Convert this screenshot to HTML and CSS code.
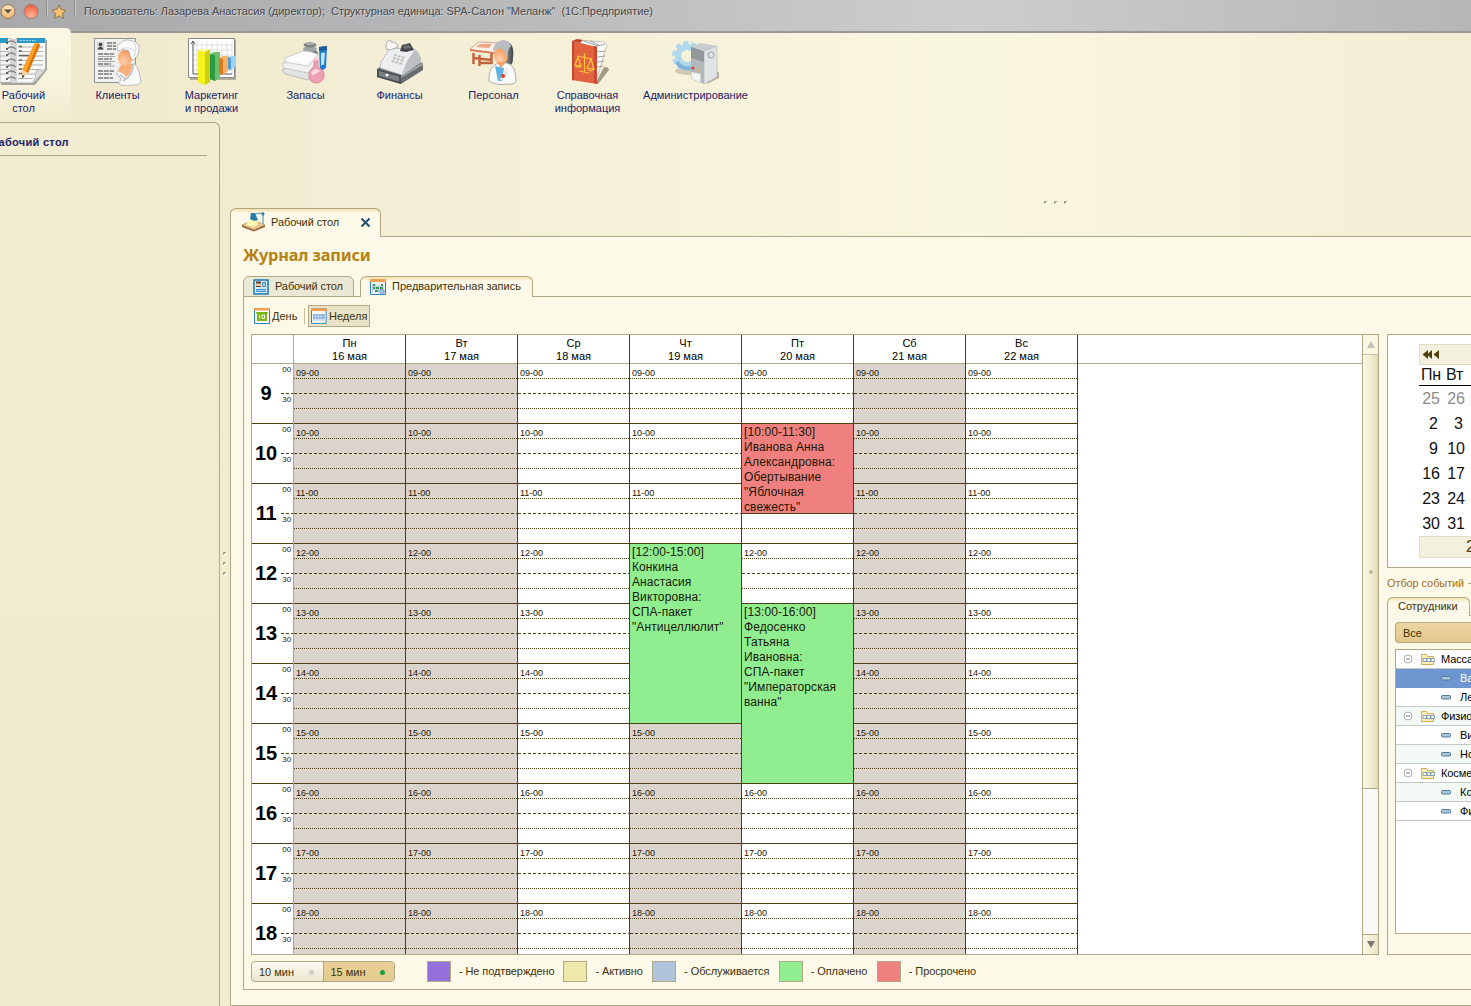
FILE: index.html
```html
<!DOCTYPE html>
<html lang="ru">
<head>
<meta charset="utf-8">
<title>Журнал записи</title>
<link rel="stylesheet" href="styles.css">
</head>
<body>
<div class="app">
  <header class="titlebar">
    <svg class="tb-icons" width="80" height="31" viewBox="0 0 80 31">
      <defs>
        <radialGradient id="gOr" cx=".5" cy=".3" r=".7"><stop offset="0" stop-color="#ffeccb"/><stop offset="1" stop-color="#eeb063"/></radialGradient>
        <radialGradient id="gRed" cx=".5" cy=".85" r=".8"><stop offset="0" stop-color="#ffb898"/><stop offset="1" stop-color="#f2603f"/></radialGradient>
        <linearGradient id="gCoat"><stop offset="0" stop-color="#fff"/><stop offset="1" stop-color="#dcdcdc"/></linearGradient>
        <linearGradient id="gHair"><stop offset="0" stop-color="#eceded"/><stop offset="1" stop-color="#3f4346"/></linearGradient>
        <radialGradient id="gFace" cx=".4" cy=".7" r=".8"><stop offset="0" stop-color="#ffd0ae"/><stop offset="1" stop-color="#f58f50"/></radialGradient>
      </defs>
      <circle cx="8" cy="11.500" r="7" fill="url(#gOr)" stroke="#8d7a62"/>
      <path d="M4 9.500h8l-4 4z" fill="#5b4a36"/>
      <circle cx="31" cy="11.500" r="7" fill="url(#gRed)" stroke="#a8796c"/>
      <path d="M46.500 1v16M74.500 1v16" stroke="#8b8b8b"/><path d="M47.500 1v16M75.500 1v16" stroke="#c9c9c9"/>
      <path d="M59 5l2.100 4.500 5 .6-3.700 3.400 1 4.900-4.400-2.500-4.400 2.500 1-4.900-3.700-3.400 5-.6z" fill="#fbc070" stroke="#8a7355"/>
    </svg>
    <span class="tb-text">Пользователь: Лазарева Анастасия (директор);&nbsp; Структурная единица: SPA-Салон "Меланж"&nbsp; (1С:Предприятие)</span>
  </header>

  <nav class="sections">
    <a class="section active">
      <svg width="48" height="48" viewBox="0 0 48 48">
        <path d="M1 2h46v30L35 47H1z" fill="#a5a49a"/>
        <path d="M0 .5h11v44H0z" fill="#f4f4f2" stroke="#a2a2a0" stroke-width=".7"/>
        <path d="M16 .5h29.500V32L34 45H16z" fill="#f8f8f6" stroke="#a2a2a0" stroke-width=".7"/>
        <path d="M17 0h28v5H17zM0 0h8v5H0z" fill="#2b9ac8"/><path d="M20 2.500h16" stroke="#a9dcf0" stroke-dasharray="2 1"/>
        <path d="M11 1h5v44h-5z" fill="#d4d4d2"/>
        <path d="M18 9h25M18 13.500h25M18 18h25M18 22.500h25M18 27h25M18 31.500h23M18 36h18M18 40.500h15M0 13.500h9M0 18h9M0 22.500h9M0 27h9M0 31.500h9M0 36h9" stroke="#b0b0b0"/>
        <path d="M19 8.500h3M19 13h3M19 17.500h10M19 22h3M19 26.500h3M19 31h3M19 35.500h3" stroke="#666" stroke-width="1.500"/>
        <g fill="none" stroke="#888" stroke-width="1.200"><path d="M7 5q4-4 9 0M7 11q4-4 9 0M7 17q4-4 9 0M7 23q4-4 9 0M7 29q4-4 9 0M7 35q4-4 9 0M7 41q4-4 9 0"/></g>
        <g fill="#444"><circle cx="7" cy="5" r="1"/><circle cx="7" cy="11" r="1"/><circle cx="7" cy="17" r="1"/><circle cx="7" cy="23" r="1"/><circle cx="7" cy="29" r="1"/><circle cx="7" cy="35" r="1"/><circle cx="7" cy="41" r="1"/></g>
        <path d="M46 31q-6 3-10 2 1 7-4 13z" fill="#dededc" stroke="#a5a5a3" stroke-width=".7"/>
        <path d="M34 6q3-3 6 1L28 35l-6-3z" fill="#fda226"/><path d="M38 5l2 2-12 28-2-1z" fill="#dd720c"/><path d="M22 32l6 3-5.500 5z" fill="#f4d2a0"/><path d="M22.500 37l2 1-2.500 2.500z" fill="#222"/>
      </svg>
      <span>Рабочий<br>стол</span>
    </a>
    <a class="section">
      <svg width="48" height="48" viewBox="0 0 48 48">
        <path d="M.5.500h41v44H.5z" fill="#f0f0ef" stroke="#8f9296"/>
        <path d="M3 4h7v8H3z" fill="#d5d5d5"/><circle cx="6.500" cy="6.500" r="1.800" fill="#444"/><path d="M3.500 11.500q3-6 6 0z" fill="#444"/>
        <path d="M13 5h9M13 8h9M13 11h9M4 16h16M4 21h14M4 26h13M4 33h16M4 36h14M4 40h15" stroke="#777" stroke-width="1.400" stroke-dasharray="5 .8"/>
        <path d="M4 18.500h17M4 23.500h17M4 28h17" stroke="#aaa"/>
        <path d="M24 45q5-3 1-7-4-2-1-5 4-5 7-6l10-1q4 4 6 18-3 4-9 3-9 2-14-2z" fill="#fafafa" stroke="#a0a0a0" stroke-width=".7"/>
        <path d="M28 26q-5 5-3 8 5 1 7 5 6-4 6-13l-4-1z" fill="#f9ae7a"/>
        <path d="M39 26q1 11-10 17M26 37l6 4" fill="none" stroke="#bdbdbd" stroke-width="1.500"/>
        <ellipse cx="31" cy="20" rx="7" ry="8" fill="url(#gFace)"/>
        <path d="M24 13q-3-6 3-8 4-5 11-2 8 1 7 9 0 6-4 8l-2 3-3-5-1-5q-5-3-11 0z" fill="#fafafa" stroke="#a5a5a5" stroke-width=".7"/><path d="M27 11q8-3 13 2M40 5q4 5 0 13" fill="none" stroke="#d5d5d5"/>
      </svg>
      <span>Клиенты</span>
    </a>
    <a class="section">
      <svg width="48" height="48" viewBox="0 0 48 48">
        <path d="M2 2h46v40H2z" fill="#b1ad9a"/><path d="M.5.500h46v39H.5z" fill="#fff" stroke="#888"/>
        <path d="M9 4v33M14 4v33M19 4v33M24 4v33M29 4v33M34 4v33M39 4v33M44 4v33M4 7h40M4 12h40M4 17h40M4 22h40M4 27h40M4 32h40" stroke="#d3d3d3" stroke-width=".7"/>
        <path d="M5 3v33h39M3 6l2-3 2 3" fill="none" stroke="#555"/>
        <path d="M10 13l4-2h8v33l-5 3-7-3z" fill="#cfcf12"/><path d="M10 13l7 1v33l-7-3z" fill="#f4f41c"/><path d="M10 13l4-2h8l-5 3z" fill="#fdfd9a"/>
        <path d="M22 16l4-2h6v26l-5 3-5-2z" fill="#6cc06c"/><path d="M22 16l5 1v26l-5-2z" fill="#2f9a46"/>
        <path d="M31 20l4-2h5v15l-5 4-4-2z" fill="#f9b065"/><path d="M31 20l4 1v16l-4-2z" fill="#e07522"/>
        <path d="M40 19l3-1h5v10l-5 4-3-1z" fill="#9dd2f0"/><path d="M40 19l3 1v12l-3-1z" fill="#4f9fd0"/>
      </svg>
      <span>Маркетинг<br>и продажи</span>
    </a>
    <a class="section">
      <svg width="48" height="48" viewBox="0 0 48 48">
        <ellipse cx="28" cy="15" rx="8" ry="3.500" fill="#6d7476"/><ellipse cx="28" cy="11" rx="7" ry="3" fill="#a0a5a6"/><ellipse cx="28" cy="7" rx="6.500" ry="2.500" fill="#7c8385"/><ellipse cx="28" cy="5.500" rx="4" ry="1.500" fill="#a9adae"/>
        <path d="M37 9l8-1-1 22-6 4z" fill="#1e7fd0"/><path d="M39 15l4-.5-1 12-3 1z" fill="#bfe2fa"/><path d="M37 9l8-1v4l-8 1z" fill="#2458a0"/>
        <path d="M0 32l22-9 14 7-10 12-23-6z" fill="#e4e4e4" stroke="#a9a9a9" stroke-width=".7"/>
        <path d="M0 26l22-9 14 6-10 12-24-5z" fill="#f0f0f0" stroke="#b5b5b5" stroke-width=".7"/>
        <path d="M3 20l18-7q10 0 15 4l-10 11-23-4z" fill="#fcfcfc" stroke="#b9b9b9" stroke-width=".7"/>
        <path d="M32 21h4v8q7 3 6 9-1 7-8 7-7-1-7-7 0-6 5-9z" fill="#f0a0b4" stroke="#cd7d90" stroke-width=".7"/><path d="M29 34q3-4 9-2-4 5-8 5z" fill="#fbd7df"/><ellipse cx="34" cy="21" rx="3" ry="1.500" fill="#f8c8d4"/>
      </svg>
      <span>Запасы</span>
    </a>
    <a class="section">
      <svg width="48" height="48" viewBox="0 0 48 48">
        <path d="M1 31l9-6h37v7L25 46 1 39z" fill="#6a6e70"/><path d="M1 31l24 6v9L1 39z" fill="#4b4f51"/><path d="M3 33l20 5.500v5L3 38z" fill="#7c8082"/><path d="M25 37l22-13v3L25 40z" fill="#9a9ea0"/>
        <path d="M5 24l9-14 24 1q6 3 7 13L26 37 4 30z" fill="#eceeef" stroke="#a8acae" stroke-width=".7"/><path d="M26 36l5-13 8-11q5 4 6 12z" fill="#bcc0c2"/>
        <path d="M18 17l11 3M17 20l11 3M15.500 23l11 3M20 16l-4 9M24 17l-4 9M28 18l-4 9" stroke="#b2b6b8" stroke-width=".8"/>
        <path d="M26 7l8-2 4 7-8 2-6-1z" fill="#45494c"/><path d="M27 8l6-1 2 3-7 1z" fill="#6f7476"/><path d="M10 11q0-9 4-9 1 4 4 2 4 1 4 5l-8 3z" fill="#f9f9f9" stroke="#999" stroke-width=".8"/><circle cx="11" cy="37" r="1.500" fill="#f4f4f4"/>
      </svg>
      <span>Финансы</span>
    </a>
    <a class="section">
      <svg width="48" height="48" viewBox="0 0 48 48">
        <path d="M3.500 15v11M9.500 17v11M21.500 15v11M3 20l19 2M9.500 25h12" stroke="#c2633a" stroke-width="2.500"/><path d="M0 11l9-7 20 1-5 10-22-3z" fill="#fff4ec" stroke="#c98563" stroke-width=".7"/><path d="M10 6h12l-3 4-13-1z" fill="#f2a583"/><path d="M0 11l24 3v2L0 13z" fill="#d9805a"/>
        <path d="M26 8q3-6 10-5 9 2 7 17 0 7-3 7l-7-2z" fill="url(#gHair)"/>
        <ellipse cx="31" cy="18" rx="7" ry="8" fill="url(#gFace)"/><path d="M23 13q0-10 11-11 6 1 7 6-4 4-4 11-2-6-5-8-5-1-9 2z" fill="#b9bdbf"/>
        <path d="M19 43q-1-14 9-18h9q9 2 9 18-2 4-8 3-12 2-19-3z" fill="#fafafa" stroke="#8c8c8c" stroke-width=".7"/><path d="M25 28l3 15h4l2-13z" fill="#5db4e0"/><path d="M27 24h9l-5 6z" fill="#f6a068"/><path d="M29 43l8-15 1 9z" fill="#e8e8e8"/><circle cx="33" cy="38" r="2" fill="#ea3820"/>
      </svg>
      <span>Персонал</span>
    </a>
    <a class="section">
      <svg width="48" height="48" viewBox="0 0 48 48">
        <path d="M31 46l9-17q5 0 5 3L34 46z" fill="#a39b86"/>
        <path d="M14 2l26 2 3 3-10 33z" fill="#fff" stroke="#aaa" stroke-width=".7"/><path d="M30 9l11-3M33 14l8-1M33 19l8-1M33 24l7-1M33 29l6-1M20 3l14 5M26 3l9 4" stroke="#888" stroke-width=".8"/>
        <path d="M8 3l5-2 6 1-3 3z" fill="#c2452b"/>
        <path d="M8 3l25 6v37L8 42z" fill="#e2623f"/><path d="M8 3l2 .5v39L8 42z" fill="#c24a2e"/><path d="M30 8l3 1v37l-3-1z" fill="#c94a2e"/>
        <path d="M20.500 15v19M13 18l15 3M15 33l10 2M11 27l3-8 3 9zM23 30l4-9 3 10zM11 27q3 4 6 1M23 30q3 5 7 1" stroke="#ffc63a" stroke-width="1.200" fill="none"/>
      </svg>
      <span>Справочная<br>информация</span>
    </a>
    <a class="section wide">
      <svg width="48" height="48" viewBox="0 0 48 48">
        <ellipse cx="17" cy="33" rx="14" ry="4" fill="#d0cbb0"/>
        <circle cx="15" cy="18" r="13" fill="none" stroke="#b0d8ee" stroke-width="4" stroke-dasharray="5 3.170"/><circle cx="15" cy="18" r="9" fill="none" stroke="#b0d8ee" stroke-width="6"/><path d="M5 24a12 12 0 0 0 14 6" fill="none" stroke="#7fb2d6" stroke-width="4"/>
        <path d="M35 46l12-6v-6l-9-2z" fill="#b9b49e"/>
        <path d="M19 9l10-4 16 3-10 5z" fill="#c9cccd"/><path d="M19 9l13 4v33l-13-5z" fill="#b4b8ba"/><path d="M32 13l13-5v31l-13 7z" fill="#e0e2e3" stroke="#a9adb0" stroke-width=".5"/>
        <path d="M19 9l13 4v11l-13-4z" fill="#92979a"/><path d="M19.500 34l9 2v8l-9-3z" fill="#f4f4f4"/><circle cx="21" cy="30" r="1.500" fill="#e43c1f"/><circle cx="27" cy="32" r="1" fill="#f0b63a"/><circle cx="39" cy="17" r="3" fill="none" stroke="#9da1a4"/>
      </svg>
      <span>Администрирование</span>
    </a>
  </nav>

  <div class="workspace">
    <aside class="sidebar"><h2>Рабочий стол</h2></aside>
    <div class="splitter"><i></i><i></i><i></i></div>
    <main class="main">
      <div class="hsplit"><i></i><i></i><i></i></div>
      <div class="tabs outer">
        <div class="tab on">
          <svg width="26" height="22" viewBox="0 0 26 22"><path d="M1 14l12-5 11 5-11 5z" fill="#e9c896" stroke="#b98e5c" stroke-width=".7"/><path d="M1 14v2l12 4.500 11-4.500v-2l-11 5z" fill="#96683a"/><path d="M9 7l-4 7 8 2 4-3-1-5z" fill="#fff9b4"/><path d="M10 2l4 0 3 7q-4 2-8-1z" fill="#2a7aa8"/><path d="M14 3l8-1v11" fill="none" stroke="#5b9cbc" stroke-width="1.200"/><circle cx="22" cy="3" r="1.500" fill="#2a7aa8"/></svg>
          <span>Рабочий стол</span>
          <svg class="close" width="11" height="11" viewBox="0 0 11 11"><path d="M1.500 1.500l8 8M9.500 1.500l-8 8" stroke="#23506f" stroke-width="2"/></svg>
        </div>
      </div>
      <section class="panel">
        <h1>Журнал записи</h1>
        <div class="tabs inner">
          <div class="tab off">
            <svg width="16" height="16" viewBox="0 0 16 16"><path d="M1 1h14v14H1z" fill="#d6ebfa" stroke="#1b77b4" stroke-width="1.500"/><path d="M3 3h5v5H3z" fill="#f4c7a0"/><path d="M3 2.500h5v2H3zM3 7h5v1H3z" fill="#5a4038"/><path d="M9.500 3.500h3v4h-3zM3.500 10.500h9v2h-9z" fill="#a8d5f3" stroke="#3f93c8"/></svg>
            <span>Рабочий стол</span>
          </div>
          <div class="tab on">
            <svg width="16" height="16" viewBox="0 0 16 16"><path d="M.5.500h15v15H.5z" fill="#eaf5fc" stroke="#2a80b8"/><path d="M0 0h16v3H0z" fill="#f0a050"/><path d="M2.500 5v9M5.500 5v9M8.500 5v9M11.500 5v9M2 7.500h12M2 10.500h12" stroke="#a9c9e0" stroke-width=".7"/><path d="M3 5h2v2H3zM11 5h2v2h-2zM3 8h2v2H3zM6 8h3v2H6zM10 8h3v2h-3zM5 11h3v2H5z" fill="#3a9a52"/><path d="M10 11h4v3h-4z" fill="#b5d5ee" stroke="#6a94b4"/></svg>
            <span>Предварительная запись</span>
          </div>
        </div>
        <div class="page">
          <div class="journal">
            <div class="toolbar">
              <button class="tool">
                <svg width="16" height="16" viewBox="0 0 16 16"><path d="M.5.500h15v15H.5z" fill="#fff" stroke="#2a80b8"/><path d="M0 0h16v2.500H0z" fill="#f0a050"/><path d="M2 4h12v1.500H2zM3 5h10v8H3z" fill="#7cb518"/><path d="M5.500 6.500v4M8 7h2.500v3.500H8z" fill="none" stroke="#fff"/></svg>День</button>
              <i class="sep"></i>
              <button class="tool pressed">
                <svg width="16" height="16" viewBox="0 0 16 16"><path d="M.5.500h15v15H.5z" fill="#fff" stroke="#2a80b8"/><path d="M0 0h16v3H0z" fill="#f0a050"/><path d="M2 6h12v5H2z" fill="#7fa8dc"/><path d="M2 11h12v2H2z" fill="#c9daf0"/><path d="M4.500 4.500v9M7.500 4.500v9M10.500 4.500v9M2 8.500h12" stroke="#dbe7f5" stroke-width=".7"/></svg>Неделя</button>
            </div>
            <div class="schedule">
              <div class="week" id="week"></div>
              <div class="scroll"><b class="up"></b><div class="thumb"><i></i></div><b class="down"></b></div>
            </div>
            <div class="footer">
              <div class="steps"><span>10 мин<i></i></span><span class="sel">15 мин<i></i></span></div>
              <div class="key"><i class="k1"></i>- Не подтверждено</div>
              <div class="key"><i class="k2"></i>- Активно</div>
              <div class="key"><i class="k3"></i>- Обслуживается</div>
              <div class="key"><i class="k4"></i>- Оплачено</div>
              <div class="key"><i class="k5"></i>- Просрочено</div>
            </div>
          </div>
          <div class="side">
            <div class="calbox">
              <div class="cal">
                <div class="calhead"><svg width="18" height="9" viewBox="0 0 18 9"><path d="M6 0v9L.5 4.500zM10 0v9L5 4.500zM17 0v9L11.500 4.500z" fill="#4e3f08"/></svg></div>
                <div class="dow"><span>Пн</span><span>Вт</span></div>
                <div class="days"><span class="dim">25</span><span class="dim">26</span><span class="one">2</span><span class="one">3</span><span class="one">9</span><span>10</span><span>16</span><span>17</span><span>23</span><span>24</span><span>30</span><span>31</span></div>
                <div class="calfoot">2</div>
              </div>
            </div>
            <div class="legend">Отбор событий<hr></div>
            <div class="tabs staff"><div class="tab on"><span>Сотрудники</span></div></div>
            <div class="staffpage">
              <div class="all">Все</div>
              <div class="tree" id="tree"></div>
            </div>
          </div>
        </div>
      </section>
    </main>
  </div>
</div>
<script src="script.js"></script>
</body>
</html>
```
FILE: styles.css
```css
* { box-sizing: border-box; }
body { margin: 0; font: 11px/13px "Liberation Sans", Arial, sans-serif; color: #3d3208; overflow: hidden; }
.app { width: 1471px; height: 1006px; display: flex; flex-direction: column; overflow: hidden; background: linear-gradient(90deg, #efe8cb, #f3edd5 25%, #f9f6df 66%, #f4edd6); }
h1, h2 { margin: 0; }

.titlebar { height: 33px; flex: none; display: flex; background: linear-gradient(90deg, #a9a9ab, #b4b4b6 25%, #cdcdcd 66%, #b5b6b8); border-bottom: 2px solid #9b998f; }
.tb-icons { flex: none; }
.tb-text { padding: 5px 0 0 4px; color: #4a4a4a; text-shadow: 1px 1px 0 #d0d0d0; white-space: nowrap; letter-spacing: -.045px; }

.sections { height: 94px; flex: none; display: flex; margin: -5px 0 0 -24px; position: relative; }
.section { width: 94px; display: flex; flex-direction: column; align-items: center; padding: 10px 0 0 1px; gap: 3px; text-align: center; color: #1b2268; white-space: nowrap; }
.section.wide { width: 122px; }
.section.active { width: 95px; margin-right: -1px; padding-left: 0; border-radius: 0 5px 0 0; background: linear-gradient(#faf8e4, #f8f5de 50%, #f1eacf); }
.section svg { flex: none; }

.workspace { flex: 1; display: flex; min-height: 0; }
.sidebar { width: 220px; flex: none; border: solid #b0a886; border-width: 1px 1px 0 0; border-radius: 0 6px 0 0; background: linear-gradient(#f2ecd2, #efe9ce); padding: 13px 12px 0 0; }
.sidebar h2 { font-size: 11px; line-height: 13px; color: #1b2268; border-bottom: 1px solid #b0a886; padding-bottom: 6px; margin-left: -9px; letter-spacing: .3px; }
.splitter { width: 10px; flex: none; display: flex; flex-direction: column; align-items: center; gap: 6px; padding-top: 430px; }
.splitter i, .hsplit i { width: 4px; height: 4px; background: linear-gradient(135deg, #a9a17f 50%, #fbf8e8 50%); }
.main { flex: 1; min-width: 0; display: flex; flex-direction: column; }
.hsplit { height: 86px; display: flex; gap: 6px; align-items: flex-end; justify-content: center; padding: 0 0 3px 411px; flex: none; }

.tabs { display: flex; position: relative; z-index: 1; margin-bottom: -1px; }
.tab { display: flex; align-items: center; border: 1px solid #b0a886; border-bottom: 0; border-radius: 6px 6px 0 0; white-space: nowrap; }
.tab.on { background: linear-gradient(#f7dfa8, #fcf9e9 4px); }
.outer .tab { width: 151px; height: 29px; padding: 0 0 2px 10px; gap: 4px; letter-spacing: -.08px; }
.close { margin: 1px 0 0 17px; }
.panel { flex: 1; min-height: 0; background: #fcf9e9; border: 1px solid #b0a886; border-right: 0; padding: 8px 0 15px 12px; display: flex; flex-direction: column; }
h1 { font: bold 16.300px/20px "Noto Sans", sans-serif; color: #b5820f; letter-spacing: -.15px; }
.inner { margin-top: 11px; align-items: flex-end; gap: 6px; }
.inner .tab { height: 21px; gap: 6px; padding: 0 0 1px 9px; }
.inner .off { width: 111px; background: #ebe8d5; border-bottom: 1px solid #b0a886; padding-bottom: 0; letter-spacing: -.1px; }
.inner .on { width: 173px; }
.page { flex: 1; min-height: 0; border: 1px solid #b0a886; border-right: 0; display: flex; gap: 8px; padding: 8px 0 7px 7px; }
.journal { width: 1128px; flex: none; display: flex; flex-direction: column; }
.toolbar { display: flex; height: 22px; flex: none; align-items: center; }
.tool { font: inherit; color: inherit; border: 1px solid transparent; background: none; height: 22px; padding: 0 2px; display: flex; align-items: center; gap: 2px; }
.tool.pressed { background: #e9e4c8; border-color: #b0a886; width: 62px; }
.sep { width: 1px; height: 16px; background: #c9bf98; margin: 0 3px 0 4px; }

.schedule { height: 621px; flex: none; margin-top: 7px; border: 1px solid #b0a886; display: flex; background: #fff; }
.week { flex: 1; display: flex; overflow: hidden; background: linear-gradient(#b0a886, #b0a886) 0 28px / 100% 1px no-repeat; }
.col { width: 112px; flex: none; position: relative; border-right: 1px solid #4e3f12; color: #1b1804; }
.col.time { width: 42px; border-color: #b0a886; }
.head { height: 29px; padding-top: 2px; text-align: center; border-bottom: 1px solid #b0a886; font-size: 11px; color: #000; }
.hour { height: 60px; border-bottom: 1px solid #4e3f12; font-size: 9px; line-height: 10px; padding: 4px 0 0 2px;
  background: repeating-linear-gradient(90deg, #4e3f12 0 1px, transparent 1px 2px) 0 14px / 100% 1px no-repeat,
    repeating-linear-gradient(90deg, #4e3f12 0 3px, transparent 3px 5px) 0 29px / 100% 1px no-repeat,
    repeating-linear-gradient(90deg, #4e3f12 0 1px, transparent 1px 2px) 0 44px / 100% 1px no-repeat; }
.hour.busy { background-color: #dbd4cd; }
.time .hour { display: flex; justify-content: space-between; padding: 0 2px 0 0; background: repeating-linear-gradient(90deg, #4e3f12 0 3px, transparent 3px 5px) 29px 29px / 13px 1px no-repeat; }
.time b { font-size: 20px; line-height: 58px; width: 28px; text-align: center; color: #000; letter-spacing: -.2px; }
.time span { font-size: 8px; line-height: 10px; display: flex; flex-direction: column; gap: 20px; padding-top: 1px; letter-spacing: -.1px; }
.time i { font-style: normal; }
.event { position: absolute; left: 0; right: 0; padding: 1px 0 0 2px; font-size: 12px; line-height: 15px; color: #1b1804; border-bottom: 1px solid #4e3f12; letter-spacing: .1px; }
.event.paid { background: #90ee90; }
.event.late { background: #f08080; }
.scroll { width: 16px; flex: none; border-left: 1px solid #b0a886; background: #f9f9f5; display: flex; flex-direction: column; }
.scroll b { height: 20px; display: grid; place-items: center; background: #f9f6e4; border-bottom: 1px solid #c9c3a4; }
.scroll b::after { content: ""; border: 4px solid transparent; border-top: 0; border-bottom: 7px solid #c4c2b8; }
.scroll .down { margin-top: auto; border: 0; border-top: 1px solid #b0a886; background: linear-gradient(90deg, #fcf9e9, #e9e4c8); }
.scroll .down::after { border-bottom: 0; border-top: 7px solid #7b786e; }
.thumb { height: 434px; display: grid; place-items: center; background: linear-gradient(90deg, #faf7e4, #f3eed4 50%, #e2dab4); border-bottom: 1px solid #b0a886; }
.thumb i { width: 4px; height: 4px; border-radius: 2px; background: #bdb798; }

.footer { display: flex; align-items: center; padding-top: 6px; }
.steps { display: flex; width: 144px; height: 21px; border: 1px solid #b0a886; border-radius: 4px; overflow: hidden; margin-right: 32px; background: linear-gradient(#fcfaf0, #ebe7d0); }
.steps span { flex: 1; display: flex; align-items: center; justify-content: space-between; padding: 1px 9px 0 7px; }
.steps i { width: 5px; height: 5px; border-radius: 3px; background: #cfcdc4; }
.steps .sel { background: linear-gradient(#e9cf96, #e6cb90); border-left: 1px solid #b0a886; }
.steps .sel i { background: #1c9a3c; }
.key { display: flex; align-items: center; gap: 8px; margin-right: 9px; white-space: nowrap; letter-spacing: -.1px; }
.key + .key { margin-right: 9.500px; }
.key i { width: 24px; height: 21px; border: 1px solid #b0a886; }
.k1 { background: #9370db; } .k2 { background: #eee8aa; } .k3 { background: #b0c4de; } .k4 { background: #90ee90; } .k5 { background: #f08080; }

.side { flex: 1; min-width: 0; padding: 29px 0 27px; display: flex; flex-direction: column; overflow: hidden; }
.calbox { height: 234px; flex: none; border: 1px solid #b0a886; border-right: 0; background: #fff; padding: 9px 0 0 31px; }
.cal { font-size: 16px; line-height: 20px; color: #111; }
.calhead { height: 21px; background: #f4f0de; border: 1px solid #e2ddc4; border-right: 0; padding: 5px 2px; line-height: 0; }
.dow { display: flex; gap: 5px; padding: 0 2px; height: 21px; border-bottom: 1px solid #000; letter-spacing: -.2px; }
.days { display: grid; grid-template-columns: 21px 25px; line-height: 25px; text-align: right; }
.one { padding-right: 2px; }
.dim { color: #8b8b8b; }
.calfoot { height: 22px; background: #f4f0de; border: 1px solid #e2ddc4; border-right: 0; color: #4e3f08; padding-left: 46px; overflow: hidden; }
.legend { display: flex; align-items: center; gap: 4px; color: #a5701c; height: 29px; padding-top: 2px; flex: none; white-space: nowrap; letter-spacing: -.1px; }
.legend hr { flex: 1; border: 0; border-top: 1px solid #b0a886; }
.staff .tab { width: 83px; height: 19px; padding: 0 0 2px 10px; }
.staffpage { flex: 1; border: 1px solid #b0a886; border-right: 0; padding: 6px 0 20px 7px; display: flex; flex-direction: column; }
.all { height: 21px; flex: none; border: 1px solid #b0a886; border-right: 0; border-radius: 4px 0 0 4px; background: linear-gradient(#ecd6a2, #e4c88c); padding: 4px 7px; }
.tree { flex: 1; margin-top: 6px; border: 1px solid #b0a886; border-right: 0; background: #fff; color: #000; overflow: hidden; }
.row { height: 19px; border-bottom: 1px solid #c5c9c4; display: flex; align-items: center; white-space: nowrap; padding-left: 45px; gap: 9px; }
.row.group { padding-left: 7px; gap: 7px; letter-spacing: -.1px; }
.row.group span { margin-left: -2px; }
.row.alt { background: #f3faf6; }
.row.cur { background: #6d95cf; color: #fff; border-color: #6d95cf; }
.row svg { flex: none; }
```
FILE: script.js
```js
const days = [
  { name: 'Пн', date: '16 мая', busy: 9 },
  { name: 'Вт', date: '17 мая', busy: 9 },
  { name: 'Ср', date: '18 мая', busy: 99 },
  { name: 'Чт', date: '19 мая', busy: 15, events: [
    { from: 12, to: 15, kind: 'paid', text: ['[12:00-15:00]', 'Конкина', 'Анастасия', 'Викторовна:', 'СПА-пакет', '"Антицеллюлит"'] }] },
  { name: 'Пт', date: '20 мая', busy: 99, events: [
    { from: 10, to: 11.5, kind: 'late', text: ['[10:00-11:30]', 'Иванова Анна', 'Александровна:', 'Обертывание', '"Яблочная', 'свежесть"'] },
    { from: 13, to: 16, kind: 'paid', text: ['[13:00-16:00]', 'Федосенко', 'Татьяна', 'Ивановна:', 'СПА-пакет', '"Императорская', 'ванна"'] }] },
  { name: 'Сб', date: '21 мая', busy: 9 },
  { name: 'Вс', date: '22 мая', busy: 99 },
];
const hours = [9, 10, 11, 12, 13, 14, 15, 16, 17, 18];

const timeCol = '<div class="col time"><div class="head"></div>' +
  hours.map(h => `<div class="hour"><b>${h}</b><span><i>00</i><i>30</i></span></div>`).join('') + '</div>';

// an hour whose start is taken by an appointment carries no label
const taken = (d, h) => (d.events || []).some(e => h >= e.from && h < e.to);
const label = (d, h) => taken(d, h) ? '' : `${String(h).padStart(2, '0')}-00`;

const dayCol = d => `<div class="col"><div class="head">${d.name}<br>${d.date}</div>` +
  hours.map(h => `<div class="hour${h >= d.busy ? ' busy' : ''}">${label(d, h)}</div>`).join('') +
  (d.events || []).map(e => `<div class="event ${e.kind}" style="top:${29 + (e.from - 9) * 60}px;height:${(e.to - e.from) * 60}px">${e.text.join('<br>')}</div>`).join('') +
  '</div>';

document.getElementById('week').innerHTML = timeCol + days.map(dayCol).join('');

const folder = '<svg width="10" height="10" viewBox="0 0 10 10"><circle cx="5" cy="5" r="4" fill="#fff" stroke="#aaa"/><path d="M3 5h4" stroke="#777"/></svg>' +
  '<svg width="16" height="13" viewBox="0 0 16 13"><path d="M1.500 11.500v-10h5l1 2h6v8z" fill="#fbeeb8" stroke="#cfae58"/><path d="M3 5.500h3.500v3H3zM7 5.500h3.500v3H7zM11 5.500h3.500v3H11z" fill="#fff" stroke="#6c8aa8" stroke-width=".8"/></svg>';
const item = '<svg width="10" height="5" viewBox="0 0 10 5"><rect x=".5" y=".5" width="9" height="3.500" rx="1" fill="#a9c6da" stroke="#557a96"/></svg>';
const rows = [
  ['group', 'Масса'], ['cur', 'Ва'], ['', 'Ле'],
  ['group alt', 'Физио'], ['', 'Ви'], ['alt', 'Но'],
  ['group', 'Косме'], ['alt', 'Ко'], ['', 'Фи'],
];
document.getElementById('tree').innerHTML = rows.map(([c, t]) =>
  `<div class="row ${c}">${c.startsWith('group') ? folder : item}<span>${t}</span></div>`).join('');
```
